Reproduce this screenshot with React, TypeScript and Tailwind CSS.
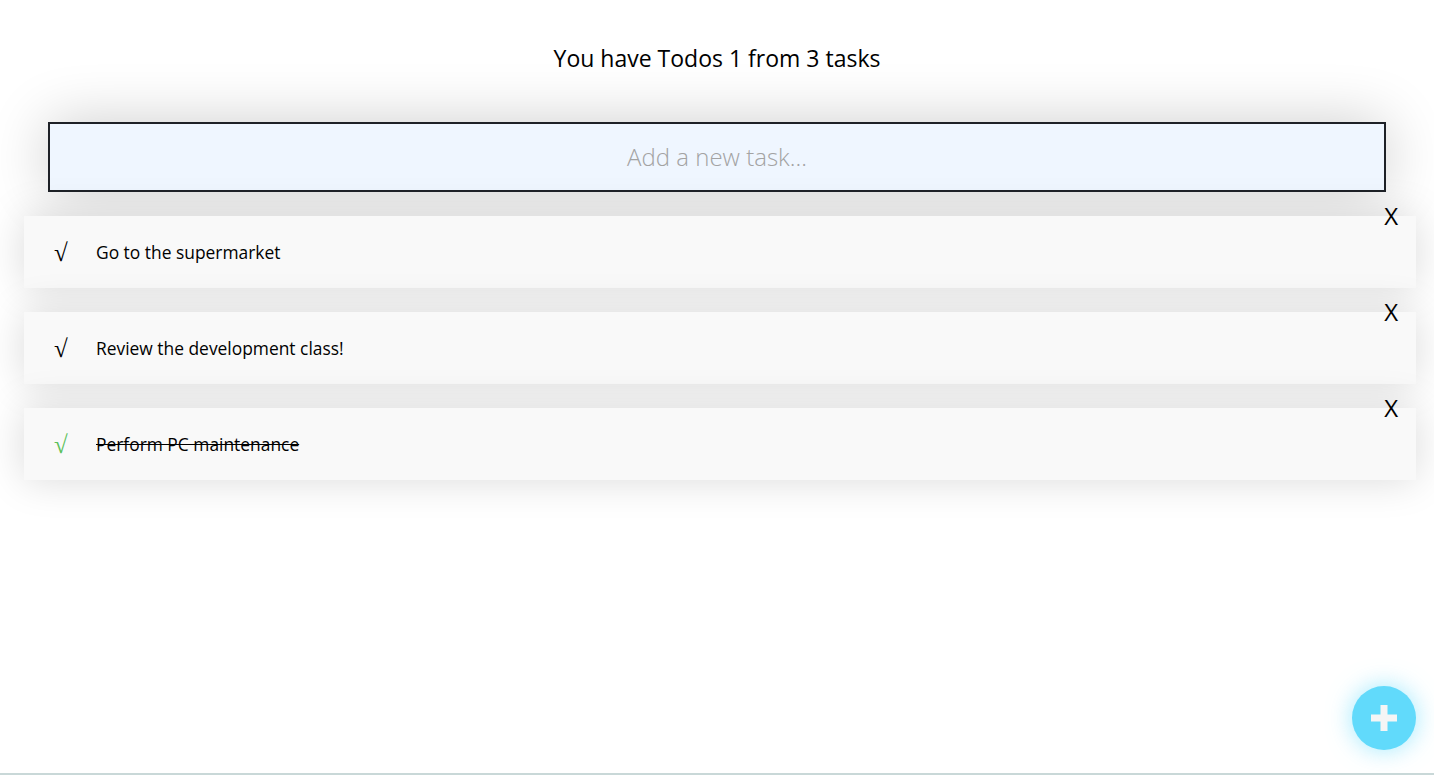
import React from "react";

const todos = [
  { text: "Go to the supermarket", done: false },
  { text: "Review the development class!", done: false },
  { text: "Perform PC maintenance", done: true },
];

export default function App() {
  return (
    <div
      className="min-h-[775px] bg-white border-b-2 border-[#c9d8d8] flex flex-col"
      style={{ fontFamily: '"Open Sans", "Noto Sans", sans-serif' }}
    >
      <h1 className="pt-[42px] text-center text-[23px] leading-[32px] text-black">
        You have Todos 1 from 3 tasks
      </h1>
      <div className="mt-[48px] px-[48px]">
        <div className="h-[70px] border-2 border-[#1e2127] bg-[#eff6ff] flex items-center justify-center shadow-[0_0_60px_rgba(0,0,0,0.2)]">
          <span className="text-[24px] font-light text-[#a3a3a3]">Add a new task...</span>
        </div>
      </div>
      <ul className="mt-[24px] pl-[24px] pr-[18px] flex flex-col gap-[24px]">
        {todos.map((t) => (
          <li
            key={t.text}
            className="relative h-[72px] bg-[#f9f9f9] flex items-center pl-[30px] shadow-[0_0_40px_rgba(0,0,0,0.15)]"
          >
            <span
              className={`w-[42px] text-[25px] leading-none font-['Liberation_Serif',serif] ${t.done ? "text-[#5cc15c]" : "text-black"}`}
            >
              √
            </span>
            <span className={`text-[17.4px] text-black ${t.done ? "line-through" : ""}`}>{t.text}</span>
            <span className="absolute right-[18px] top-[-16px] text-[24px] leading-[32px] text-black">X</span>
          </li>
        ))}
      </ul>
      <button className="fixed right-[18px] bottom-[25px] w-[64px] h-[64px] rounded-full bg-[#61dafb] flex items-center justify-center shadow-[0_0_24px_rgba(97,218,251,0.6)]">
        <svg width="26" height="26" viewBox="0 0 26 26">
          <rect x="9.5" y="0" width="7" height="26" fill="#f5f5f5" />
          <rect x="0" y="9.5" width="26" height="7" fill="#f5f5f5" />
        </svg>
      </button>
    </div>
  );
}
